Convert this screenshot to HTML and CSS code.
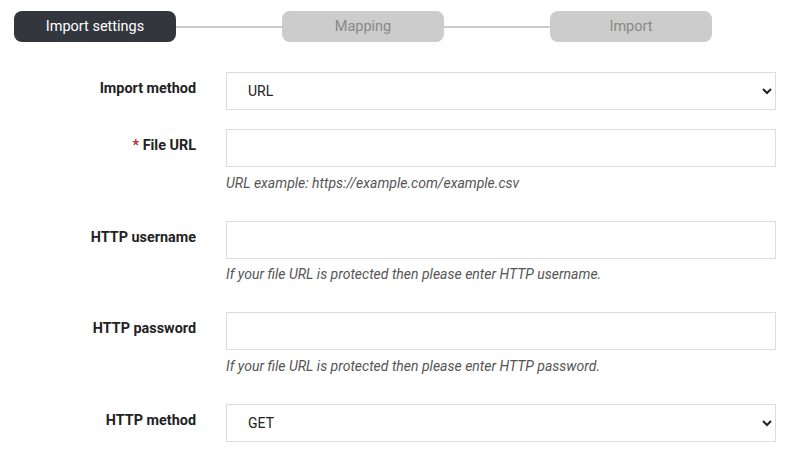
FILE: index.html
```html
<!DOCTYPE html>
<html lang="en">
<head>
<meta charset="utf-8">
<title>Import</title>
<link rel="stylesheet" href="styles.css">
</head>
<body>
<div class="page">
  <div class="steps">
    <div class="step active">Import settings</div>
    <div class="line"></div>
    <div class="step">Mapping</div>
    <div class="line"></div>
    <div class="step">Import</div>
  </div>
  <form class="form">
    <div class="row">
      <label class="label">Import method</label>
      <div class="field">
        <select class="control"><option>URL</option></select>
      </div>
    </div>
    <div class="row">
      <label class="label"><span class="req">*</span> File URL</label>
      <div class="field">
        <input class="control" type="text">
        <div class="help">URL example: https://example.com/example.csv</div>
      </div>
    </div>
    <div class="row">
      <label class="label">HTTP username</label>
      <div class="field">
        <input class="control" type="text">
        <div class="help">If your file URL is protected then please enter HTTP username.</div>
      </div>
    </div>
    <div class="row">
      <label class="label">HTTP password</label>
      <div class="field">
        <input class="control" type="password">
        <div class="help">If your file URL is protected then please enter HTTP password.</div>
      </div>
    </div>
    <div class="row">
      <label class="label">HTTP method</label>
      <div class="field">
        <select class="control"><option>GET</option></select>
      </div>
    </div>
  </form>
</div>
</body>
</html>
```

FILE: styles.css
```css
html, body {
  margin: 0;
  padding: 0;
  background: #fff;
}
body {
  font-family: Roboto, "Liberation Sans", sans-serif;
  color: #222;
}
.page {
  padding: 11px 24px 0 14px;
}
.steps {
  display: flex;
  align-items: center;
  width: 698px;
}
.step {
  width: 162px;
  height: 31px;
  box-sizing: border-box;
  border-radius: 8px;
  background: #cccccc;
  color: #888888;
  font-size: 14.5px;
  display: flex;
  align-items: center;
  justify-content: center;
}
.step.active {
  background: #33363d;
  color: #ffffff;
}
.line {
  flex: 1;
  height: 2px;
  background: #cccccc;
}
.form {
  margin-top: 30px;
}
.row {
  display: grid;
  grid-template-columns: 182px 1fr;
  column-gap: 30px;
  margin-bottom: 19px;
}
.label {
  text-align: right;
  font-weight: 700;
  font-size: 14.4px;
  line-height: 20px;
  padding-top: 7px;
  color: #222;
}
.req {
  color: #c0262d;
}
.field {
  display: flex;
  flex-direction: column;
}
.control {
  height: 38px;
  box-sizing: border-box;
  border: 1px solid #dddddd;
  border-radius: 0;
  background: #fff;
  font-family: inherit;
  font-size: 14px;
  color: #222;
  padding: 0 10px 0 20px;
  margin: 0;
  outline: none;
}
select.control {
  padding-left: 17px;
}
.help {
  margin: 5.5px 0 9px;
  font-size: 14px;
  line-height: 20px;
  font-style: italic;
  color: #555;
}
```
